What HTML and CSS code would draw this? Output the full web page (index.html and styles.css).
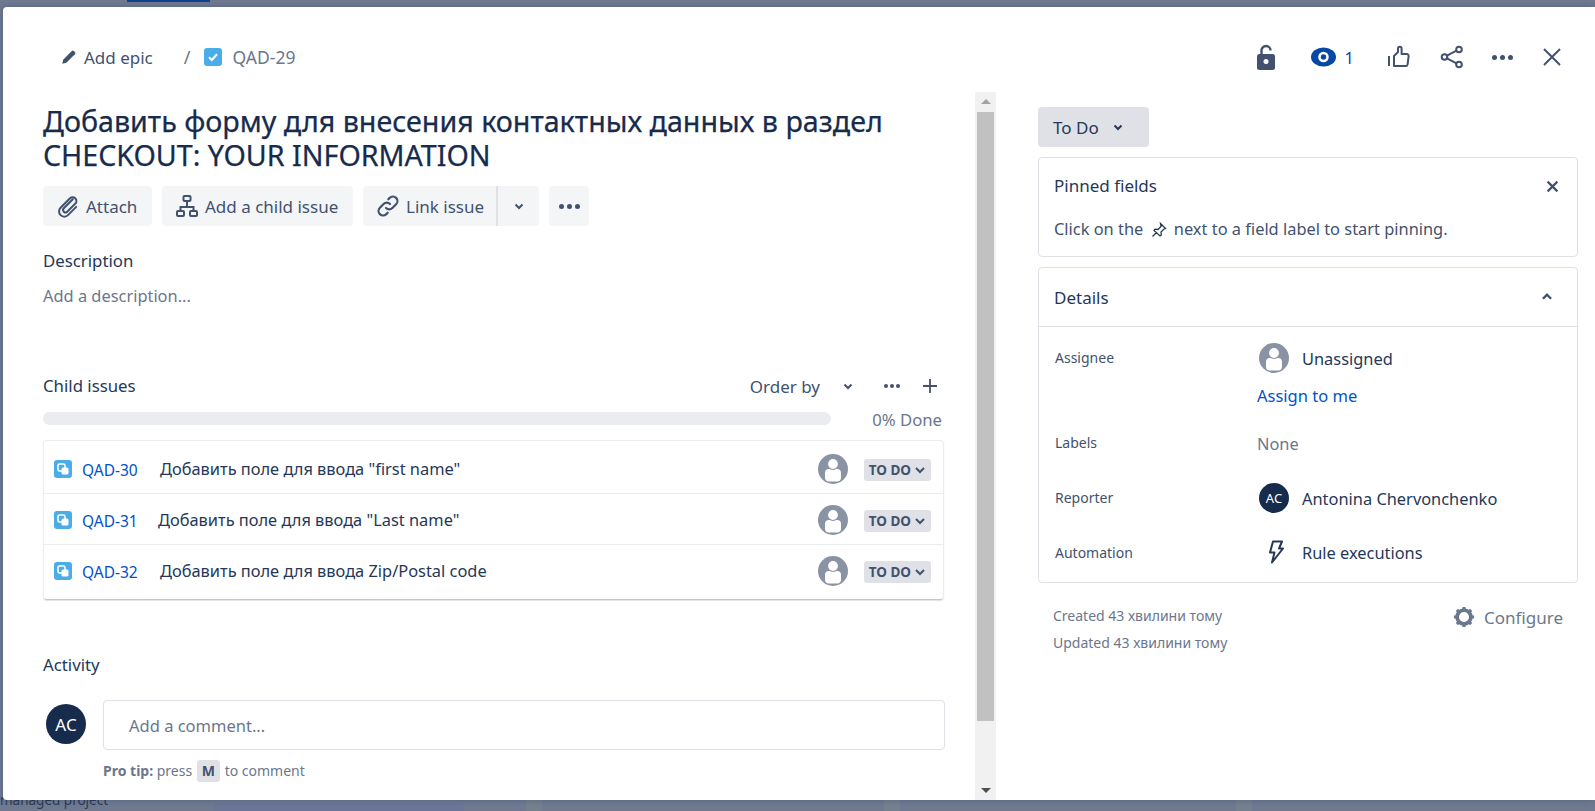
FILE: index.html
```html
<!DOCTYPE html>
<html lang="en">
<head>
    <meta charset="UTF-8">
    <title>QAD-29</title>
    <link rel="stylesheet" href="styles.css">
</head>
<body>
    <!--page behind the modal-->
    <div class="back-tab"></div>
    <div class="back-text">managed project</div>
    <div class="back-block"></div>
    <div class="back-col col-a"></div>
    <div class="back-col col-b"></div>
    <div class="back-col col-c"></div>

    <div class="modal">
        <!--left column-->
        <div class="main">
            <div class="crumbs">
                <span class="epic">
                    <svg class="ic-pen" viewBox="0 0 16 16"><path d="M2 14l.8-3.6L10.500 2.700a1.300 1.300 0 0 1 1.800 0l1 1a1.300 1.300 0 0 1 0 1.800L5.600 13.200z" fill="#42526e"/></svg>
                    Add epic
                </span>
                <span class="slash">/</span>
                <svg class="ic-check" viewBox="0 0 18 18"><rect width="18" height="18" rx="3" fill="#4bade8"/><path d="M5 9.300l2.800 2.700L13 6.300" fill="none" stroke="#fff" stroke-width="2.200"/></svg>
                <span class="key">QAD-29</span>
            </div>
            <h1 class="title">Добавить форму для внесения контактных данных в раздел CHECKOUT: YOUR INFORMATION</h1>
            <div class="actions">
                <a class="btn btn-attach">
                    <svg class="ic" viewBox="0 0 24 24" fill="none" stroke="#42526e" stroke-width="2" stroke-linecap="round"><path d="M19.500 4.500a4 4 0 0 0-5.700 0L4.600 13.700a5.200 5.200 0 0 0 7.400 7.400l8.200-8.200M16.800 5.300l-9 9a2.400 2.400 0 0 0 3.400 3.400l9-9a4 4 0 0 0-.7-4.200"/></svg>
                    Attach
                </a>
                <a class="btn btn-child">
                    <svg class="ic" viewBox="0 0 24 24" fill="none" stroke="#42526e" stroke-width="2"><rect x="8.500" y="2" width="7" height="5" rx="1"/><rect x="2" y="17" width="7" height="5" rx="1"/><rect x="15" y="17" width="7" height="5" rx="1"/><path d="M12 7v6M5.500 17v-4h13v4"/></svg>
                    Add a child issue
                </a>
                <div class="btn-split">
                    <a class="btn btn-link">
                        <svg class="ic" viewBox="0 0 24 24" fill="none" stroke="#42526e" stroke-width="2.200" stroke-linecap="round"><path d="M10 14a4.500 4.500 0 0 0 6.400 0l3.700-3.700a4.500 4.500 0 0 0-6.400-6.400l-1.400 1.400"/><path d="M14 10a4.500 4.500 0 0 0-6.400 0l-3.700 3.700a4.500 4.500 0 0 0 6.400 6.400l1.400-1.400"/></svg>
                        Link issue
                    </a>
                    <a class="btn btn-caret">
                        <svg class="ic-chev" viewBox="0 0 12 12"><path d="M2.500 4.500L6 8l3.500-3.500" fill="none" stroke="#42526e" stroke-width="2"/></svg>
                    </a>
                </div>
                <a class="btn btn-more"><span class="dots"><i></i><i></i><i></i></span></a>
            </div>

            <h2 class="label label-desc">Description</h2>
            <div class="placeholder">Add a description...</div>

            <div class="child-head">
                <h2 class="label">Child issues</h2>
                <span class="order">Order by</span>
                <svg class="ic-chev chev-order" viewBox="0 0 12 12"><path d="M2.500 4.500L6 8l3.500-3.500" fill="none" stroke="#42526e" stroke-width="2"/></svg>
                <span class="dots dots-small"><i></i><i></i><i></i></span>
                <svg class="ic-plus" viewBox="0 0 16 16"><path d="M8 1v14M1 8h14" stroke="#42526e" stroke-width="1.800"/></svg>
            </div>
            <div class="progress">
                <div class="bar"></div>
                <span class="done">0% Done</span>
            </div>

            <div class="child-list">
                <div class="child-row">
                    <svg class="ic-sub" viewBox="0 0 18 18"><rect width="18" height="18" rx="3" fill="#4bade8"/><rect x="4" y="4" width="7" height="7" rx="1.500" fill="none" stroke="#fff" stroke-width="1.500"/><rect x="7.500" y="7.500" width="7" height="7" rx="1.500" fill="#fff"/></svg>
                    <a class="child-key">QAD-30</a>
                    <span class="child-name">Добавить поле для ввода "first name"</span>
                    <svg class="avatar-none" viewBox="0 0 30 30"><circle cx="15" cy="15" r="15" fill="#8993a4"/><rect x="7" y="15" width="16" height="12.500" rx="4" fill="#fff"/><circle cx="15" cy="10" r="5.500" fill="#fff" stroke="#8993a4" stroke-width="1.200"/></svg>
                    <span class="lozenge">TO DO <svg viewBox="0 0 12 12"><path d="M2 4l4 4 4-4" fill="none" stroke="#42526e" stroke-width="2"/></svg></span>
                </div>
                <div class="child-row">
                    <svg class="ic-sub" viewBox="0 0 18 18"><rect width="18" height="18" rx="3" fill="#4bade8"/><rect x="4" y="4" width="7" height="7" rx="1.500" fill="none" stroke="#fff" stroke-width="1.500"/><rect x="7.500" y="7.500" width="7" height="7" rx="1.500" fill="#fff"/></svg>
                    <a class="child-key key-short">QAD-31</a>
                    <span class="child-name">Добавить поле для ввода "Last name"</span>
                    <svg class="avatar-none" viewBox="0 0 30 30"><circle cx="15" cy="15" r="15" fill="#8993a4"/><rect x="7" y="15" width="16" height="12.500" rx="4" fill="#fff"/><circle cx="15" cy="10" r="5.500" fill="#fff" stroke="#8993a4" stroke-width="1.200"/></svg>
                    <span class="lozenge">TO DO <svg viewBox="0 0 12 12"><path d="M2 4l4 4 4-4" fill="none" stroke="#42526e" stroke-width="2"/></svg></span>
                </div>
                <div class="child-row">
                    <svg class="ic-sub" viewBox="0 0 18 18"><rect width="18" height="18" rx="3" fill="#4bade8"/><rect x="4" y="4" width="7" height="7" rx="1.500" fill="none" stroke="#fff" stroke-width="1.500"/><rect x="7.500" y="7.500" width="7" height="7" rx="1.500" fill="#fff"/></svg>
                    <a class="child-key">QAD-32</a>
                    <span class="child-name">Добавить поле для ввода Zip/Postal code</span>
                    <svg class="avatar-none" viewBox="0 0 30 30"><circle cx="15" cy="15" r="15" fill="#8993a4"/><rect x="7" y="15" width="16" height="12.500" rx="4" fill="#fff"/><circle cx="15" cy="10" r="5.500" fill="#fff" stroke="#8993a4" stroke-width="1.200"/></svg>
                    <span class="lozenge">TO DO <svg viewBox="0 0 12 12"><path d="M2 4l4 4 4-4" fill="none" stroke="#42526e" stroke-width="2"/></svg></span>
                </div>
            </div>

            <h2 class="label label-activity">Activity</h2>
            <div class="comment">
                <span class="avatar avatar-big">AC</span>
                <div class="comment-body">
                    <div class="comment-box">Add a comment...</div>
                    <div class="tip"><b>Pro tip:</b> press <kbd>M</kbd> to comment</div>
                </div>
            </div>
        </div>

        <!--fake scrollbar-->
        <div class="scrollbar">
            <div class="arrow arrow-up"></div>
            <div class="thumb"></div>
            <div class="arrow arrow-down"></div>
        </div>

        <!--right column-->
        <div class="side">
            <div class="toolbar">
                <svg class="ic-lock" viewBox="0 0 18 26"><path d="M4.500 11V6.500a4.500 4.500 0 0 1 9 0" fill="none" stroke="#42526e" stroke-width="2.400"/><rect y="10" width="18" height="16" rx="2.500" fill="#42526e"/><circle cx="9" cy="17.500" r="2.500" fill="#fff"/></svg>
                <svg class="ic-eye" viewBox="0 0 26 20"><ellipse cx="13" cy="10" rx="13" ry="10" fill="#0747a6"/><circle cx="13" cy="10" r="5.500" fill="#fff"/><circle cx="13" cy="10" r="2.800" fill="#0747a6"/></svg>
                <span class="watch">1</span>
                <svg class="ic-like" viewBox="0 0 24 24" fill="none" stroke="#42526e" stroke-width="2" stroke-linejoin="round"><path d="M2 11v10M7 21V11l4-4V3.500a1.800 1.800 0 0 1 3.600 0V9h5a2 2 0 0 1 2 2.300l-1 8a2 2 0 0 1-2 1.700z"/></svg>
                <svg class="ic-share" viewBox="0 0 24 24" fill="none" stroke="#42526e" stroke-width="2"><circle cx="19" cy="4.500" r="2.800"/><circle cx="4.500" cy="12" r="2.800"/><circle cx="19" cy="19.500" r="2.800"/><path d="M7 10.700l9.500-5M7 13.300l9.500 5"/></svg>
                <span class="dots dots-top"><i></i><i></i><i></i></span>
                <svg class="ic-close" viewBox="0 0 20 20"><path d="M2 2l16 16M18 2L2 18" stroke="#42526e" stroke-width="2"/></svg>
            </div>

            <a class="status">To Do
                <svg class="ic-chev" viewBox="0 0 12 12"><path d="M2.500 4.500L6 8l3.500-3.500" fill="none" stroke="#253858" stroke-width="2"/></svg>
            </a>

            <div class="panel pinned">
                <div class="panel-top">
                    <h3>Pinned fields</h3>
                    <svg class="ic-x" viewBox="0 0 12 12"><path d="M1.500 1.500l9 9M10.500 1.500l-9 9" stroke="#42526e" stroke-width="2"/></svg>
                </div>
                <p>Click on the
                    <svg class="ic-pin" viewBox="0 0 16 16" fill="none" stroke="#253858" stroke-width="1.300"><path d="M9.500 1.500l5 5-1.500.5-3 3 .3 3-1.300 1L3 8.500l1-1.300 3 .3 3-3zM5.500 10.500L1.500 14.500"/></svg>
                    next to a field label to start pinning.</p>
            </div>

            <div class="panel details">
                <div class="details-head">
                    <h3>Details</h3>
                    <svg class="ic-up" viewBox="0 0 12 12"><path d="M2.500 7.500L6 4l3.500 3.500" fill="none" stroke="#42526e" stroke-width="2"/></svg>
                </div>
                <div class="field field-assignee">
                    <span class="field-name">Assignee</span>
                    <div class="field-value">
                        <div class="person">
                            <svg class="avatar-none" viewBox="0 0 30 30"><circle cx="15" cy="15" r="15" fill="#8993a4"/><rect x="7" y="15" width="16" height="12.500" rx="4" fill="#fff"/><circle cx="15" cy="10" r="5.500" fill="#fff" stroke="#8993a4" stroke-width="1.200"/></svg>
                            Unassigned
                        </div>
                        <a class="assign">Assign to me</a>
                    </div>
                </div>
                <div class="field field-labels">
                    <span class="field-name">Labels</span>
                    <div class="field-value none">None</div>
                </div>
                <div class="field field-reporter">
                    <span class="field-name">Reporter</span>
                    <div class="field-value person">
                        <span class="avatar">AC</span>
                        Antonina Chervonchenko
                    </div>
                </div>
                <div class="field field-auto">
                    <span class="field-name">Automation</span>
                    <div class="field-value person">
                        <svg class="ic-bolt" viewBox="0 0 16 24"><path d="M5 1.500h9l-3 7h4L4 22.500l2.500-10H2z" fill="none" stroke="#253858" stroke-width="2" stroke-linejoin="round"/></svg>
                        Rule executions
                    </div>
                </div>
            </div>

            <div class="foot">
                <div class="dates">
                    <div>Created 43 хвилини тому</div>
                    <div>Updated 43 хвилини тому</div>
                </div>
                <a class="configure">
                    <svg class="ic-gear" viewBox="0 0 24 24"><circle cx="12" cy="12" r="7.500" fill="none" stroke="#6b778c" stroke-width="4"/><path d="M12 1v4M12 19v4M1 12h4M19 12h4M4.200 4.200l2.800 2.800M17 17l2.800 2.800M19.800 4.200L17 7M7 17l-2.800 2.800" stroke="#6b778c" stroke-width="3.500"/></svg>
                    Configure
                </a>
            </div>
        </div>
    </div>
</body>
</html>
```

FILE: styles.css
```css
*{
    margin:0;
    padding:0;
    box-sizing:border-box;
}
body{
    height:811px;
    overflow:hidden;
    padding:7px 0 11px 3px;
    background-color:#6f7a91;
    font-family:"Noto Sans","Open Sans",sans-serif;
    font-size:16.4px;
    color:#253858;
    position:relative;
}
/*bits of the page behind*/
.back-tab{
    position:absolute;
    left:127px;
    top:0;
    width:83px;
    height:2px;
    background-color:#12408a;
}
.back-text{
    position:absolute;
    left:0;
    top:791px;
    font-size:13.500px;
    color:#2d3a55;
}
.back-block{
    position:absolute;
    left:214px;
    top:803px;
    width:250px;
    height:8px;
    background-color:#6b7596;
    border-radius:3px 3px 0 0;
}
.back-col{
    position:absolute;
    top:800px;
    height:11px;
    width:16px;
    background-color:#75808f;
}
.col-a{
    left:526px;
}
.col-b{
    left:884px;
}
.col-c{
    left:1236px;
}
.modal{
    display:flex;
    height:793px;
    background-color:#fff;
    border-radius:4px 0 0 4px;
    position:relative;
    box-shadow:0 0 6px rgba(9,30,66,.25);
}
h1,h2,h3{
    font-weight:400;
}
/*left column*/
.main{
    width:972px;
    padding:0 30px 0 40px;
}
.crumbs{
    display:flex;
    align-items:center;
    height:40px;
    margin-top:30px;
}
.epic{
    display:flex;
    align-items:center;
    margin-left:17px;
    font-size:17px;
    color:#42526e;
}
.ic-pen{
    width:18px;
    height:18px;
    margin-right:6px;
}
.slash{
    margin:0 13px 0 31px;
    font-size:18px;
    color:#6b778c;
}
.ic-check{
    width:18px;
    height:18px;
    margin-right:11px;
}
.key{
    font-size:17.500px;
    color:#6b778c;
}
.title{
    font-size:28.650px;
    line-height:34px;
    color:#172b4d;
    margin-top:27px;
    -webkit-text-stroke:.25px #172b4d;
}
.actions{
    display:flex;
    gap:10px;
    margin-top:14px;
}
.btn{
    display:flex;
    align-items:center;
    height:40px;
    background-color:#f4f5f7;
    border-radius:4px;
    color:#42526e;
    font-size:17px;
}
.ic{
    width:24px;
    height:24px;
    margin-right:6px;
}
.btn-attach{
    width:109px;
    padding-left:13px;
}
.btn-child{
    width:191px;
    padding-left:13px;
}
.btn-split{
    display:flex;
}
.btn-link{
    width:135px;
    padding-left:13px;
    border-radius:4px 0 0 4px;
    border-right:2px solid #dfe1e6;
}
.btn-caret{
    width:41px;
    justify-content:center;
    border-radius:0 4px 4px 0;
}
.btn-more{
    width:40px;
    justify-content:center;
}
.ic-chev{
    width:12px;
    height:12px;
}
.dots{
    display:flex;
    gap:3px;
}
.dots i{
    width:5px;
    height:5px;
    border-radius:50%;
    background-color:#42526e;
}
.label{
    font-size:16.800px;
    line-height:24px;
}
.label-desc{
    margin-top:23px;
}
.placeholder{
    margin-top:11px;
    line-height:24px;
    color:#6b778c;
}
.child-head{
    display:flex;
    align-items:center;
    margin-top:66px;
    width:902px;
    height:24px;
}
.child-head .label{
    flex:1;
}
.order{
    font-size:17px;
    color:#42526e;
}
.chev-order{
    margin:0 0 0 22px;
}
.dots-small{
    margin-left:30px;
    gap:2px;
}
.dots-small i{
    width:4px;
    height:4px;
}
.ic-plus{
    width:16px;
    height:16px;
    margin:0 7px 0 22px;
}
.progress{
    display:flex;
    align-items:center;
    justify-content:space-between;
    width:899px;
    margin-top:6px;
    height:28px;
    font-size:16.700px;
    color:#6b778c;
}
.done{
    padding-top:2px;
}
.bar{
    width:788px;
    height:13px;
    border-radius:7px;
    background-color:#ebecf0;
}
.child-list{
    width:901px;
    margin-top:8px;
    padding-top:2px;
    border-radius:4px;
    border:1px solid #ebecf0;
    border-bottom-color:#c1c7d0;
    box-shadow:0 1px 1px rgba(9,30,66,.13);
}
.child-row{
    display:flex;
    align-items:center;
    height:51px;
    padding:0 12px 0 10px;
    border-bottom:1px solid #ebecf0;
}
.child-row:last-child{
    border-bottom:0;
    height:54px;
    padding-bottom:4px;
}
.ic-sub{
    width:18px;
    height:18px;
    margin:2px 10px 0 0;
}
.child-key{
    width:78px;
    font-size:15.500px;
    color:#0052cc;
    padding-top:4px;
}
.key-short{
    width:76px;
}
.child-name{
    flex:1;
}
.avatar-none{
    width:30px;
    height:30px;
    flex:none;
}
.child-row .avatar-none{
    margin-top:2px;
}
.lozenge{
    display:flex;
    align-items:center;
    gap:3px;
    margin:4px 0 0 16px;
    height:22px;
    padding:0 5px;
    background-color:#dfe1e6;
    border-radius:3px;
    font-size:13.500px;
    font-weight:700;
    color:#42526e;
}
.lozenge svg{
    width:12px;
    height:12px;
}
.label-activity{
    margin-top:53px;
}
.comment{
    display:flex;
    margin-top:23px;
}
.avatar{
    display:flex;
    align-items:center;
    justify-content:center;
    width:30px;
    height:30px;
    flex:none;
    border-radius:50%;
    background-color:#172b4d;
    color:#fff;
    font-size:13px;
}
.avatar-big{
    width:40px;
    height:40px;
    font-size:17px;
    margin:4px 17px 0 3px;
}
.comment-body{
    flex:1;
}
.comment-box{
    height:50px;
    width:842px;
    padding-left:25px;
    line-height:49px;
    font-size:16.500px;
    border:1px solid #dfe1e6;
    border-radius:4px;
    color:#6b778c;
}
.tip{
    margin-top:10px;
    font-size:14px;
    line-height:22px;
    color:#6b778c;
}
kbd{
    display:inline-block;
    padding:0 5px;
    font-family:inherit;
    font-weight:700;
    background-color:#dfe1e6;
    border-radius:3px;
    color:#42526e;
    margin:0 1px;
}
/*scrollbar*/
.scrollbar{
    width:21px;
    height:708px;
    margin-top:85px;
    padding:0 2px;
    background-color:#f1f1f1;
    display:flex;
    flex-direction:column;
    align-items:center;
}
.thumb{
    width:17px;
    height:609px;
    margin-top:8px;
    background-color:#c1c1c1;
}
.arrow{
    width:0;
    height:0;
    border-left:5px solid transparent;
    border-right:5px solid transparent;
}
.arrow-up{
    margin-top:7px;
    border-bottom:5px solid #a3a3a3;
}
.arrow-down{
    margin-top:auto;
    margin-bottom:7px;
    border-top:5px solid #505050;
}
/*right column*/
.side{
    flex:1;
    padding:0 17px 0 42px;
}
.toolbar{
    display:flex;
    align-items:center;
    height:30px;
    margin-top:35px;
    justify-content:flex-end;
    padding-right:16px;
}
.ic-lock{
    width:18px;
    height:26px;
    margin-right:36px;
}
.ic-eye{
    width:25px;
    height:20px;
}
.watch{
    color:#0747a6;
    margin:0 33px 0 9px;
}
.ic-like{
    width:24px;
    height:24px;
    margin-right:29px;
}
.ic-share{
    width:24px;
    height:24px;
    margin-right:28px;
}
.dots-top{
    margin-right:29px;
}
.ic-close{
    width:20px;
    height:20px;
}
.status{
    display:flex;
    align-items:center;
    gap:13px;
    width:111px;
    height:40px;
    margin-top:35px;
    padding-left:15px;
    font-size:17px;
    background-color:#dfe1e6;
    border-radius:4px;
    color:#253858;
}
.panel{
    border:1px solid #dfe1e6;
    border-radius:4px;
}
.pinned{
    height:100px;
    margin-top:10px;
    padding:16px 16px 16px 15px;
}
.panel-top{
    display:flex;
    justify-content:space-between;
    align-items:center;
    line-height:24px;
}
h3{
    font-size:17px;
}
.pinned p{
    margin-top:19px;
    color:#42526e;
}
.ic-x{
    width:13px;
    height:13px;
    margin-right:2px;
}
.ic-pin{
    width:16px;
    height:16px;
    margin:0 3px;
    vertical-align:-3px;
}
.details{
    margin-top:10px;
    height:316px;
}
.details-head{
    display:flex;
    align-items:center;
    justify-content:space-between;
    height:59px;
    padding:0 23px 0 15px;
    border-bottom:1px solid #dfe1e6;
}
.ic-up{
    width:14px;
    height:14px;
}
.field{
    display:flex;
    padding-left:16px;
}
.field-name{
    width:204px;
    font-size:14px;
    color:#42526e;
    flex:none;
}
.field-assignee{
    margin-top:16px;
}
.field-assignee .field-name{
    padding-top:5px;
}
.field-labels{
    margin-top:25px;
}
.field-labels .field-name{
    padding-top:1px;
}
.field-reporter{
    margin-top:28px;
    align-items:center;
}
.field-reporter .field-name{
    margin-top:-2px;
}
.field-auto{
    margin-top:27px;
    align-items:center;
}
.person{
    display:flex;
    align-items:center;
    gap:13px;
}
.assign{
    display:block;
    margin:11px 0 0 -2px;
    font-size:16.500px;
    color:#0052cc;
}
.none{
    margin-left:-2px;
    color:#6b778c;
}
.ic-bolt{
    width:16px;
    height:24px;
    margin:0 5px 0 9px;
}
.foot{
    display:flex;
    justify-content:space-between;
    margin-top:19px;
    padding-left:15px;
}
.dates{
    font-size:14px;
    line-height:27px;
    color:#6b778c;
}
.configure{
    display:flex;
    align-items:center;
    gap:9px;
    height:30px;
    font-size:17px;
    color:#6b778c;
    margin-right:15px;
}
.ic-gear{
    width:22px;
    height:22px;
}
```
